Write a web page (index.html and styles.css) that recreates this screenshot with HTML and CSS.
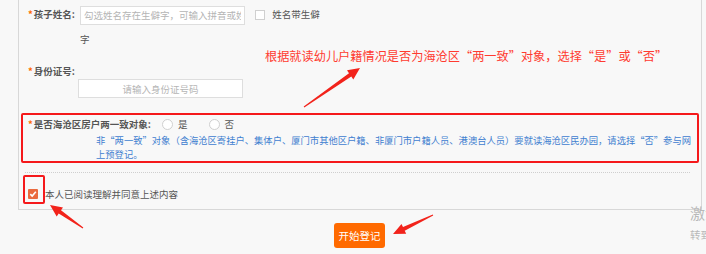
FILE: index.html
```html
<!DOCTYPE html>
<html lang="zh-CN">
<head>
    <meta charset="UTF-8">
    <title>幼儿园网上预登记</title>
    <link rel="stylesheet" href="styles.css">
</head>
<body>

    <div class="panel">
        <div class="row row-name">
            <label class="label"><span class="star">*</span>孩子姓名:</label>
            <div class="name-field">
                <input class="text-input name-input" type="text" placeholder="勾选姓名存在生僻字，可输入拼音或姓名">
                <span class="check"></span>
                <span class="hint">姓名带生僻字</span>
            </div>
        </div>

        <div class="row row-id">
            <label class="label"><span class="star">*</span>身份证号:</label>
            <input class="text-input id-input" type="text" placeholder="请输入身份证号码">
        </div>

        <div class="row row-hukou">
            <div class="hukou-line">
                <label class="label"><span class="star">*</span>是否海沧区房户两一致对象:</label>
                <span class="radio"></span><span class="radio-text">是</span>
                <span class="radio"></span><span class="radio-text">否</span>
            </div>
            <p class="note">非“两一致”对象（含海沧区寄挂户、集体户、厦门市其他区户籍、非厦门市户籍人员、港澳台人员）要就读海沧区民办园，请选择“否”参与网上预登记。</p>
        </div>

        <div class="divider"></div>

        <div class="row row-agree">
            <span class="agree-box">
                <svg width="10" height="10" viewBox="0 0 10 10"><path d="M2.3 5.2 L4.2 7 L7.8 2.8" fill="none" stroke="#fff" stroke-width="1.6"/></svg>
            </span>
            <span class="agree-text">本人已阅读理解并同意上述内容</span>
        </div>
    </div>

    <div class="actions">
        <button class="start-btn">开始登记</button>
    </div>

    <!-- annotations drawn over the screenshot -->
    <div class="tip">根据就读幼儿户籍情况是否为海沧区“两一致”对象，选择“是”或“否”</div>
    <div class="mark-box"></div>
    <svg class="arrows" width="706" height="254" viewBox="0 0 706 254">
        <polygon fill="#f2231b" points="303.7,106.6 349.0,73.2 347.0,70.3 360,68 353.3,79.4 351.3,76.5 304.3,107.4"/>
        <polygon fill="#f2231b" points="83.3,227.6 61.0,210.2 63.0,207.4 50,205 56.7,216.4 58.7,213.5 82.7,228.4"/>
        <polygon fill="#f2231b" points="433.2,215.5 404.7,230.7 406.2,233.8 393,234 401.5,223.9 403.0,227.0 432.8,214.6"/>
    </svg>

    <div class="watermark">
        <div class="wm-title">激活 Windows</div>
        <div class="wm-sub">转到“设置”以激活 Windows。</div>
    </div>

</body>
</html>
```

FILE: styles.css
```css
body {
    margin: 0;
    width: 706px;
    height: 254px;
    overflow: hidden;
    position: relative;
    background-color: #f8f8f8;
    font-family: "Noto Sans CJK SC", "Liberation Sans", sans-serif;
    color: #555;
}

.panel {
    margin-left: 18px;
    width: 682px;
    height: 209px;
    border: 1px solid #d8d8d8;
    border-top: none;
}

.row {
    padding-left: 9px;
}

.label {
    font-size: 9.5px;
    font-weight: bold;
    color: #555;
    white-space: nowrap;
}

.star {
    color: #ff6a00;
    margin-right: 1px;
}

.row-name {
    display: flex;
    padding-top: 2px;
}

.row-name .label {
    width: 52px;
    flex-shrink: 0;
    line-height: 25px;
}

.name-field {
    width: 240px;
    line-height: 25px;
    font-size: 9.5px;
}

.text-input {
    box-sizing: border-box;
    height: 19px;
    border: 1px solid #dedede;
    background: #fff;
    font-family: inherit;
    font-size: 9.5px;
    padding: 0 3px;
    outline: none;
}

.text-input::placeholder {
    color: #b5b5b5;
}

.name-input {
    width: 165px;
    vertical-align: middle;
}

.check {
    display: inline-block;
    width: 10px;
    height: 10px;
    border: 1px solid #d0d0d0;
    background: #fff;
    box-sizing: border-box;
    margin-left: 8px;
    margin-right: 5px;
    vertical-align: middle;
}

.hint {
    color: #555;
}

.row-id {
    padding-top: 12px;
}

.row-id .label {
    display: block;
    line-height: 14px;
}

.id-input {
    display: block;
    width: 165px;
    margin: 1px 0 0 50px;
    text-align: center;
}

.row-hukou {
    margin: 15px 2px 0 2px;
    padding: 0 5px 0 5px;
    border: 2px solid #f5191b;
    border-radius: 2px;
    height: 46px;
}

.hukou-line {
    display: flex;
    align-items: center;
    height: 18px;
}

.hukou-line .label {
    width: 128px;
    flex-shrink: 0;
}

.radio {
    display: inline-block;
    width: 11px;
    height: 11px;
    border: 1px solid #d0d0d0;
    border-radius: 50%;
    background: #fff;
    box-sizing: border-box;
    margin-left: 6px;
}

.radio + .radio-text + .radio {
    margin-left: 21px;
}

.radio-text {
    font-size: 9.5px;
    margin-left: 5px;
    color: #555;
}

.note {
    margin: 0 0 0 68px;
    font-size: 9.3px;
    line-height: 14px;
    color: #3f80d0;
}

.divider {
    margin: 9px 11px 0 6px;
    border-top: 1px dotted #cfcfcf;
}

.row-agree {
    display: flex;
    align-items: center;
    padding-top: 14px;
}

.agree-box {
    display: flex;
    width: 10px;
    height: 10px;
    background: #ea6a3f;
    border-radius: 1px;
}

.agree-text {
    font-size: 9.5px;
    margin-left: 7px;
    color: #555;
}

.actions {
    padding: 11px 0 0 334px;
}

.start-btn {
    width: 51px;
    height: 25px;
    border: none;
    border-radius: 3px;
    background-color: #ff6a00;
    color: #fff;
    font-family: inherit;
    font-size: 10.5px;
    padding: 0;
}

.tip {
    position: absolute;
    left: 265px;
    top: 47px;
    font-size: 12.2px;
    color: #ff3b30;
    white-space: nowrap;
}

.mark-box {
    position: absolute;
    left: 23px;
    top: 175px;
    width: 18px;
    height: 25px;
    border: 2px solid #f5191b;
    border-radius: 2px;
}

.arrows {
    position: absolute;
    left: 0;
    top: 0;
    pointer-events: none;
}

.watermark {
    position: absolute;
    left: 690px;
    top: 204px;
    white-space: nowrap;
    color: #b9b9b9;
}

.wm-title {
    font-size: 15px;
    line-height: 18px;
}

.wm-sub {
    font-size: 10.5px;
    line-height: 16px;
    margin-top: 5px;
}
```
